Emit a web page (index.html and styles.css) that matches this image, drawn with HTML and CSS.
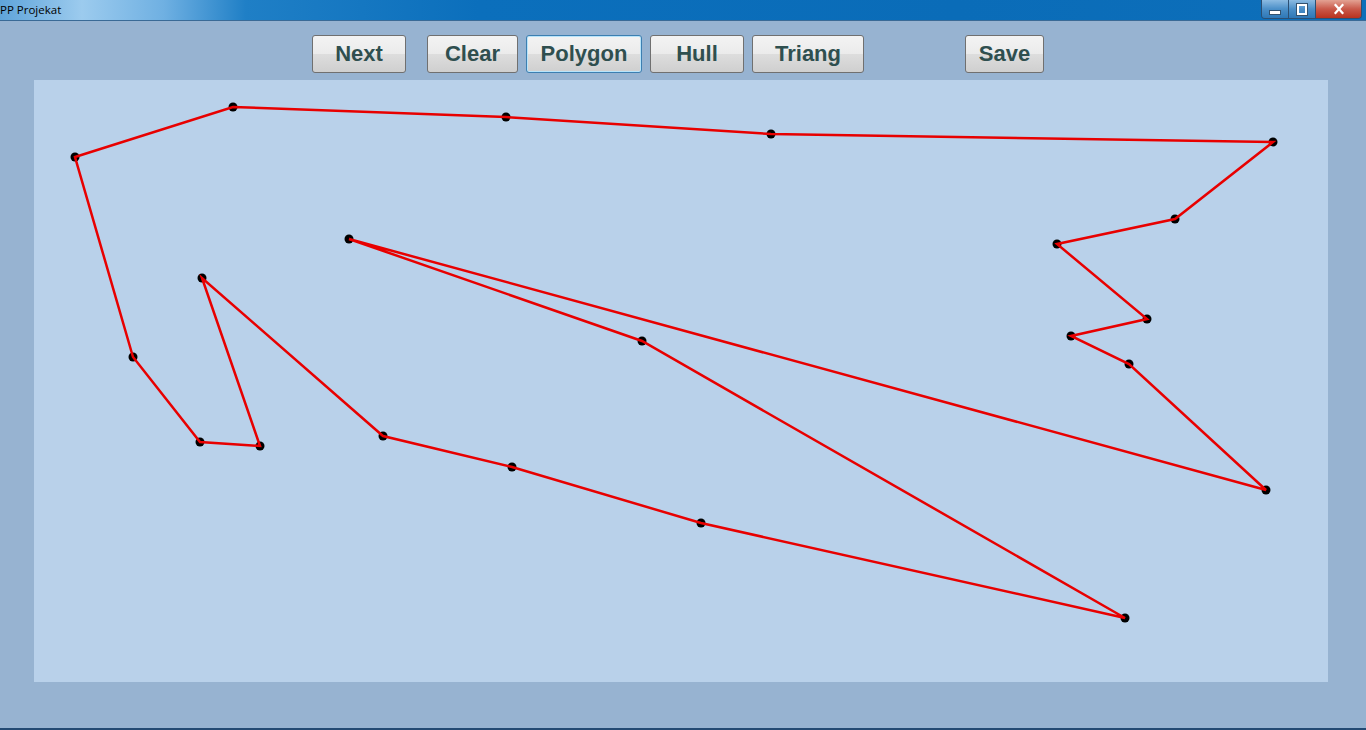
FILE: index.html
```html
<!DOCTYPE html>
<html>
<head>
<meta charset="utf-8">
<title>PP Projekat</title>
<link rel="stylesheet" href="styles.css">
</head>
<body>
<div class="window">
  <div class="titlebar">
    <span class="title">PP Projekat</span>
    <div class="controls">
      <div class="ctl min"><span class="min-bar"></span></div>
      <div class="ctl max"><span class="max-box"></span></div>
      <div class="ctl close">
        <svg width="14" height="12" viewBox="0 0 14 12"><path d="M3.5 2 L10.5 10 M10.5 2 L3.5 10" stroke="#fff" stroke-width="2.2" stroke-linecap="square"/></svg>
      </div>
    </div>
  </div>
  <div class="content">
    <div class="toolbar">
      <button class="btn b-next">Next</button>
      <button class="btn b-clear">Clear</button>
      <button class="btn b-polygon focused">Polygon</button>
      <button class="btn b-hull">Hull</button>
      <button class="btn b-triang">Triang</button>
      <button class="btn b-save">Save</button>
    </div>
    <div class="canvas">
      <svg width="1294" height="602" viewBox="34 80 1294 602">
        <g fill="#000">
          <circle cx="75" cy="157" r="4.5"/>
          <circle cx="233" cy="107" r="4.5"/>
          <circle cx="506" cy="117" r="4.5"/>
          <circle cx="771" cy="134" r="4.5"/>
          <circle cx="1273" cy="142" r="4.5"/>
          <circle cx="1175" cy="219" r="4.5"/>
          <circle cx="1057" cy="244" r="4.5"/>
          <circle cx="1147" cy="319" r="4.5"/>
          <circle cx="1071" cy="336" r="4.5"/>
          <circle cx="1129" cy="364" r="4.5"/>
          <circle cx="1266" cy="490" r="4.5"/>
          <circle cx="349" cy="239" r="4.5"/>
          <circle cx="642" cy="341" r="4.5"/>
          <circle cx="1125" cy="618" r="4.5"/>
          <circle cx="701" cy="523" r="4.5"/>
          <circle cx="512" cy="467" r="4.5"/>
          <circle cx="383" cy="436" r="4.5"/>
          <circle cx="202" cy="278" r="4.5"/>
          <circle cx="260" cy="446" r="4.5"/>
          <circle cx="200" cy="442" r="4.5"/>
          <circle cx="133" cy="357" r="4.5"/>
        </g>
        <polygon fill="none" stroke="#e80000" stroke-width="2.5" stroke-linejoin="miter"
          points="75,157 233,107 506,117 771,134 1273,142 1175,219 1057,244 1147,319 1071,336 1129,364 1266,490 349,239 642,341 1125,618 701,523 512,467 383,436 202,278 260,446 200,442 133,357"/>
      </svg>
    </div>
  </div>
  <div class="taskbar"></div>
</div>
</body>
</html>
```

FILE: styles.css
```css
html, body {
  margin: 0;
  padding: 0;
  width: 1366px;
  height: 730px;
  overflow: hidden;
  background: #97b3d1;
}

.window {
  display: flex;
  flex-direction: column;
  width: 1366px;
  height: 730px;
}

.titlebar {
  height: 20px;
  flex: none;
  display: flex;
  align-items: center;
  justify-content: space-between;
  background: linear-gradient(90deg, #5fa4da 0%, #9ccbee 6%, #6fb0e2 12%, #1f7fc6 18%, #0b6fbc 35%, #0a6cb8 70%, #0d6fba 100%);
  border-bottom: 1px solid #3a6a96;
}

.title {
  font-family: "Open Sans", "DejaVu Sans", sans-serif;
  font-size: 11.5px;
  color: #000;
  line-height: 20px;
}

.controls {
  display: flex;
  align-self: flex-start;
  margin-right: 4px;
  height: 18px;
  border: 1px solid #2c4f73;
  border-top: none;
  border-radius: 0 0 4px 4px;
  overflow: hidden;
}

.ctl {
  height: 18px;
  display: flex;
  align-items: center;
  justify-content: center;
}

.min, .max {
  width: 26px;
  background: linear-gradient(180deg, #8cbbe2 0%, #4b8fc8 50%, #2e77b6 100%);
  border-right: 1px solid #2c4f73;
}

.min-bar {
  width: 10px;
  height: 3px;
  background: #fff;
  margin-top: 6px;
  border: 1px solid #33526f;
}

.max-box {
  width: 6px;
  height: 7px;
  border: 2px solid #fff;
  outline: 1px solid #33526f;
}

.close {
  width: 45px;
  background: linear-gradient(180deg, #e3a293 0%, #c9594a 50%, #b8321f 100%);
}

.content {
  flex: 1;
  display: flex;
  flex-direction: column;
  background: #97b3d1;
}

.toolbar {
  display: flex;
  padding-top: 14px;
  padding-left: 312px;
  height: 38px;
}

.btn {
  height: 38px;
  box-sizing: border-box;
  border: 1px solid #707070;
  border-radius: 3px;
  background: linear-gradient(180deg, #f3f3f3 0%, #ebebeb 50%, #dddddd 51%, #cfcfcf 100%);
  font-family: "Liberation Sans", Arial, sans-serif;
  font-weight: bold;
  font-size: 22px;
  color: #2f4f4f;
  padding: 0;
  margin: 0;
}

.b-next { width: 94px; }
.b-clear { width: 91px; margin-left: 21px; }
.b-polygon { width: 116px; margin-left: 8px; }
.b-hull { width: 94px; margin-left: 8px; }
.b-triang { width: 112px; margin-left: 8px; }
.b-save { width: 79px; margin-left: 101px; }

.focused {
  border-color: #3c7fb1;
  box-shadow: inset 0 0 0 1px #b7e4fb;
}

.canvas {
  margin-top: 7px;
  margin-left: 34px;
  width: 1294px;
  height: 602px;
  background: #b9d1ea;
}

.canvas svg {
  display: block;
}

.taskbar {
  height: 2px;
  flex: none;
  background: #244a73;
}
```
